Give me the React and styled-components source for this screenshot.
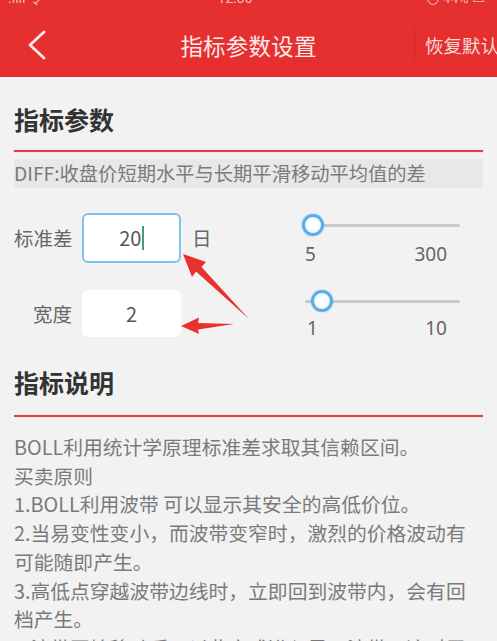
import React from "react";
import styled, { createGlobalStyle } from "styled-components";

const Global = createGlobalStyle`
  html, body { margin: 0; padding: 0; }
  body {
    background: #f2f2f2;
    font-family: "Noto Sans CJK SC", "Noto Sans", sans-serif;
    overflow: hidden;
  }
`;

const Page = styled.div`
  width: 497px;
  height: 641px;
  overflow: hidden;
  background: #f2f2f2;
`;

const Header = styled.header`
  background: #e5302f;
  height: 77px;
  display: flex;
  flex-direction: column;
  border-bottom: 1px solid #f6f6f6;
`;

const StatusBar = styled.div`
  height: 12px;
  overflow: hidden;
  display: flex;
  align-items: flex-end;
  justify-content: space-between;
  padding: 0 12px 0 8px;
  color: rgba(255, 230, 230, 0.75);
  font-family: "Roboto", sans-serif;
  font-size: 14px;
`;

const StatusItem = styled.span`
  line-height: 14px;
  margin-bottom: 7px;
`;

const Nav = styled.div`
  flex: 1;
  display: grid;
  grid-template-columns: 1fr auto 1fr;
  align-items: center;
`;

const BackButton = styled.button`
  justify-self: start;
  margin-left: 26px;
  padding: 0;
  border: 0;
  background: none;
  display: flex;
  align-items: center;
`;

const Title = styled.h1`
  margin: 0;
  font-size: 22.5px;
  font-weight: 400;
  color: #fbeaea;
  letter-spacing: 0.2px;
`;

const ResetButton = styled.div`
  justify-self: end;
  white-space: nowrap;
  border-left: 1px solid #d12828;
  height: 34px;
  display: flex;
  align-items: center;
  padding-left: 10px;
  font-size: 18.5px;
  color: #f6dada;
  margin-right: -2px;
`;

const Main = styled.main`
  position: relative;
  padding: 1px 14px 0;
`;

const SectionTitle = styled.h2`
  margin: ${(p) => p.$top}px 0 0;
  font-size: 25px;
  line-height: 30px;
  font-weight: 700;
  color: #333;
`;

const Divider = styled.div`
  height: 2px;
  margin-top: ${(p) => p.$top}px;
  background: #dd4248;
  box-shadow: 0 0 1px rgba(230, 80, 80, 0.6);
`;

const Formula = styled.div`
  margin-top: 7px;
  height: 29px;
  line-height: 29px;
  background: #e8e8e8;
  font-size: 19.3px;
  color: #7b7b7b;
  white-space: nowrap;
  overflow: hidden;
`;

const ParamRow = styled.div`
  display: flex;
  align-items: center;
  margin-top: ${(p) => p.$top}px;
  height: 49px;
`;

const ParamLabel = styled.div`
  width: 58px;
  margin-right: 10px;
  text-align: right;
  font-size: 19.5px;
  color: #666;
  white-space: nowrap;
`;

const ValueBox = styled.div`
  width: 99px;
  height: ${(p) => p.$h}px;
  box-sizing: border-box;
  background: #fff;
  border: ${(p) => (p.$focused ? "2px solid #80c3ea" : "0")};
  border-radius: 6px;
  display: flex;
  align-items: center;
  justify-content: center;
  font-size: 20px;
  color: #555;
`;

const Caret = styled.span`
  display: inline-block;
  width: 1.5px;
  height: 24px;
  margin-left: 1px;
  background: #4a9a78;
`;

const Unit = styled.div`
  width: 20px;
  margin-left: 11px;
  font-size: 19.5px;
  color: #666;
`;

const SliderCol = styled.div`
  align-self: flex-start;
  margin-left: auto;
  margin-right: 23px;
  width: 155px;
  padding-top: 1px;
`;

const Track = styled.div`
  position: relative;
  height: 22px;
  &::before {
    content: "";
    position: absolute;
    left: 0;
    right: 0;
    top: 10px;
    height: 3px;
    background: #c9c9c9;
    border-radius: 2px;
  }
`;

const Thumb = styled.div`
  position: absolute;
  top: 0;
  width: 22px;
  height: 22px;
  margin-left: -11px;
  box-sizing: border-box;
  border-radius: 50%;
  border: 3px solid #58ade6;
  background: radial-gradient(circle at 50% 50%, #ffffff 30%, #dff0fb 100%);
  box-shadow: 0 0 2px rgba(80, 160, 230, 0.6);
`;

const SliderLabels = styled.div`
  display: flex;
  justify-content: space-between;
  padding: 0 13px 0 ${(p) => p.$pl}px;
  margin-top: ${(p) => p.$gap}px;
  font-size: 19px;
  line-height: 22px;
  color: #666;
  font-family: "Noto Sans", sans-serif;
`;

const Description = styled.div`
  margin-top: 16px;
  font-size: 19.8px;
  line-height: 28.7px;
  color: #7a7a7a;
`;

const Line = styled.div`
  white-space: nowrap;
`;

const Annotation = styled.svg`
  position: absolute;
  left: 0;
  top: -78px;
  width: 497px;
  height: 641px;
  pointer-events: none;
`;

function Slider({ min, max, value, labelPad, gap }) {
  const pct = ((value - min) / (max - min)) * 100;
  return (
    <SliderCol>
      <Track>
        <Thumb style={{ left: `${pct}%` }} />
      </Track>
      <SliderLabels $pl={labelPad} $gap={gap}>
        <span>{min}</span>
        <span>{max}</span>
      </SliderLabels>
    </SliderCol>
  );
}

const lines = [
  "BOLL利用统计学原理标准差求取其信赖区间。",
  "买卖原则",
  "1.BOLL利用波带 可以显示其安全的高低价位。",
  "2.当易变性变小，而波带变窄时，激烈的价格波动有",
  "可能随即产生。",
  "3.高低点穿越波带边线时，立即回到波带内，会有回",
  "档产生。",
  "4.波带开始移动后，以此方式进入另一波带，这对于",
];

export default function App() {
  return (
    <Page>
      <Global />
      <Header>
        <StatusBar>
          <StatusItem>.ııll 令</StatusItem>
          <StatusItem>12:36</StatusItem>
          <StatusItem>◷ 44% ▭</StatusItem>
        </StatusBar>
        <Nav>
          <BackButton aria-label="返回">
            <svg width="22" height="30" viewBox="0 0 22 30">
              <polyline
                points="18,2 4,15 18,28"
                fill="none"
                stroke="#fbeaea"
                strokeWidth="2.8"
                strokeLinecap="round"
                strokeLinejoin="round"
              />
            </svg>
          </BackButton>
          <Title>指标参数设置</Title>
          <ResetButton>恢复默认</ResetButton>
        </Nav>
      </Header>
      <Main>
        <SectionTitle $top={25}>指标参数</SectionTitle>
        <Divider $top={16} />
        <Formula>DIFF:收盘价短期水平与长期平滑移动平均值的差</Formula>

        <ParamRow $top={25}>
          <ParamLabel>标准差</ParamLabel>
          <ValueBox $focused $h={50}>
            20
            <Caret />
          </ValueBox>
          <Unit>日</Unit>
          <Slider min={5} max={300} value={20} labelPad={0} gap={7} />
        </ParamRow>

        <ParamRow $top={27}>
          <ParamLabel>宽度</ParamLabel>
          <ValueBox $h={47}>2</ValueBox>
          <Unit />
          <Slider min={1} max={10} value={2} labelPad={2} gap={5} />
        </ParamRow>

        <SectionTitle $top={29}>指标说明</SectionTitle>
        <Divider $top={18} />
        <Description>
          {lines.map((l, i) => (
            <Line key={i}>{l}</Line>
          ))}
        </Description>

        <Annotation viewBox="0 0 497 641">
          <polygon
            points="183,254 206,262 201.5,267 249,319 196,271.5 192,277"
            fill="#e8302c"
          />
          <polygon
            points="181,326 199,317.5 198,323 234,324 198,329.5 199,334"
            fill="#e8302c"
          />
        </Annotation>
      </Main>
    </Page>
  );
}
